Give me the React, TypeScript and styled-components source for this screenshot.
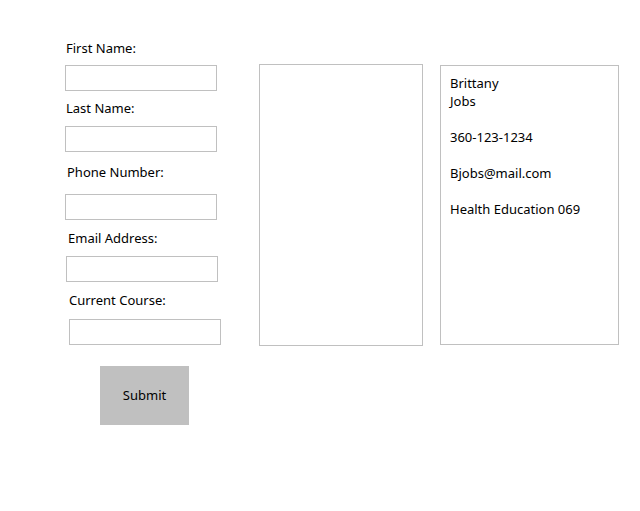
import React from "react";
import styled, { createGlobalStyle } from "styled-components";

const Global = createGlobalStyle`
  html, body {
    margin: 0;
    padding: 0;
    background: #ffffff;
  }
  body {
    font-family: "Noto Sans", "Open Sans", sans-serif;
    font-size: 13px;
    color: #000000;
  }
`;

const Window = styled.div`
  width: 640px;
  height: 511px;
  display: flex;
  align-items: flex-start;
  background: #ffffff;
`;

const FormColumn = styled.div`
  width: 259px;
  display: flex;
  flex-direction: column;
  align-items: flex-start;
`;

const Label = styled.label<{ $top: number; $left: number }>`
  display: block;
  margin-top: ${(p) => p.$top}px;
  margin-left: ${(p) => p.$left}px;
  font-size: 13px;
  line-height: 18px;
  height: 18px;
  white-space: nowrap;
`;

const TextInput = styled.input<{ $top: number; $left: number }>`
  display: block;
  box-sizing: border-box;
  width: 152px;
  height: 26px;
  margin: ${(p) => p.$top}px 0 0 ${(p) => p.$left}px;
  padding: 2px 4px;
  border: 1px solid #c0c0c0;
  background: #ffffff;
  font: inherit;
  outline: none;
`;

const SubmitButton = styled.button`
  box-sizing: border-box;
  width: 89px;
  height: 59px;
  margin: 21px 0 0 100px;
  padding: 0 0 2px 0;
  border: none;
  background: #c0c0c0;
  color: #000000;
  font-family: inherit;
  font-size: 13px;
  cursor: pointer;
`;

const ListPanel = styled.div`
  box-sizing: border-box;
  width: 164px;
  height: 282px;
  margin-top: 64px;
  border: 1px solid #c0c0c0;
  background: #ffffff;
`;

const OutputPanel = styled.div`
  box-sizing: border-box;
  width: 179px;
  height: 280px;
  margin-top: 65px;
  margin-left: 17px;
  padding: 8px 9px;
  border: 1px solid #c0c0c0;
  background: #ffffff;
  font-size: 13px;
  line-height: 18px;
  white-space: pre-line;
`;

const fields = [
  { label: "First Name:", lt: 39, ll: 66, it: 8, il: 65 },
  { label: "Last Name:", lt: 8, ll: 66, it: 9, il: 65 },
  { label: "Phone Number:", lt: 11, ll: 67, it: 13, il: 65 },
  { label: "Email Address:", lt: 9, ll: 68, it: 9, il: 66 },
  { label: "Current Course:", lt: 9, ll: 69, it: 10, il: 69 },
];

export default function App() {
  return (
    <>
      <Global />
      <Window>
        <FormColumn>
          {fields.map((f) => (
            <React.Fragment key={f.label}>
              <Label $top={f.lt} $left={f.ll}>
                {f.label}
              </Label>
              <TextInput $top={f.it} $left={f.il} type="text" />
            </React.Fragment>
          ))}
          <SubmitButton type="button">Submit</SubmitButton>
        </FormColumn>
        <ListPanel />
        <OutputPanel>
          {"Brittany\nJobs\n\n360-123-1234\n\nBjobs@mail.com\n\nHealth Education 069"}
        </OutputPanel>
      </Window>
    </>
  );
}
